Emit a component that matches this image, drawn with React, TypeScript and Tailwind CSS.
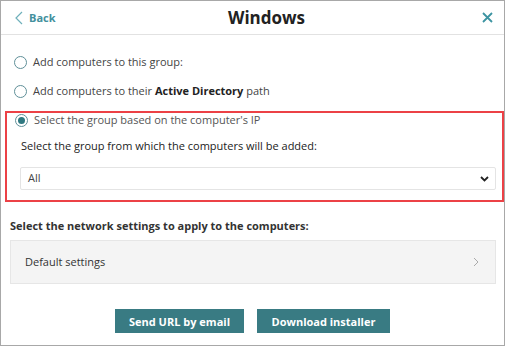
import React from "react";

function Radio({ checked }: { checked?: boolean }) {
  return (
    <span className="w-[13px] h-[13px] rounded-full border border-[#5f8f98] flex items-center justify-center shrink-0 bg-white">
      {checked && <span className="w-[7px] h-[7px] rounded-full bg-[#2f7880]" />}
    </span>
  );
}

export default function App() {
  return (
    <div className="w-[505px] h-[346px] border border-[#a8a8a8] bg-white flex flex-col font-['Open_Sans',sans-serif] text-[11px] text-[#333]">
      <div className="h-[34px] shrink-0 border-b border-[#e2e2e2] relative flex items-center justify-center pl-[28px]">
        <div className="absolute left-[13px] top-0 h-full flex items-center gap-[5px] text-[#43909d]">
          <svg width="10" height="14" viewBox="0 0 10 14" fill="none">
            <path d="M8 1 L2 7 L8 13" stroke="#6fb0bb" strokeWidth="1.2" />
          </svg>
          <span className="font-bold text-[11px] leading-none">Back</span>
        </div>
        <span className="font-bold text-[17px] text-[#222] leading-none">Windows</span>
        <div className="absolute right-[11px] top-0 h-full flex items-center">
          <svg width="11" height="11" viewBox="0 0 11 11" fill="none">
            <path d="M1 1 L10 10 M10 1 L1 10" stroke="#3d94a2" strokeWidth="1.8" />
          </svg>
        </div>
      </div>

      <div className="flex flex-col pl-[13px] pt-[21px] gap-[16px]">
        <div className="flex items-center gap-[6px] h-[13px]">
          <Radio />
          <span className="text-[#444]">Add computers to this group:</span>
        </div>
        <div className="flex items-center gap-[6px] h-[13px]">
          <Radio />
          <span className="text-[#444]">
            Add computers to their <span className="font-bold text-[#222]">Active Directory</span> path
          </span>
        </div>
      </div>

      <div className="mt-[13px] ml-[4px] w-[499px] h-[91px] border-2 border-[#ec4146] flex flex-col pl-[8px] pr-[6px]">
        <div className="flex items-center gap-[6px] h-[13px] mt-[1px]">
          <Radio checked />
          <span className="text-[#555]">Select the group based on the computer's IP</span>
        </div>
        <div className="mt-[13px] ml-[6px] text-[#222] leading-none">
          Select the group from which the computers will be added:
        </div>
        <div className="mt-[16px] ml-[5px] h-[23px] border border-[#e4e4e4] rounded-[2px] flex items-center justify-between pl-[7px] pr-[6px]">
          <span className="text-[#444]">All</span>
          <svg width="9" height="6" viewBox="0 0 9 6" fill="none">
            <path d="M1 1 L4.5 4.5 L8 1" stroke="#222" strokeWidth="1.8" />
          </svg>
        </div>
      </div>

      <div className="mt-[18px] pl-[9px] font-bold text-[#333] leading-none">
        Select the network settings to apply to the computers:
      </div>
      <div className="mt-[9px] ml-[9px] w-[486px] h-[44px] bg-[#f4f4f4] border border-[#e6e6e6] flex items-center justify-between pl-[14px] pr-[16px]">
        <span className="text-[#333]">Default settings</span>
        <svg width="6" height="10" viewBox="0 0 6 10" fill="none">
          <path d="M1 1 L5 5 L1 9" stroke="#aaa" strokeWidth="1" />
        </svg>
      </div>

      <div className="mt-[25px] flex justify-center gap-[13px]">
        <button className="w-[129px] h-[24px] bg-[#397b83] text-white font-bold text-[11px] leading-none">
          Send URL by email
        </button>
        <button className="w-[133px] h-[24px] bg-[#397b83] text-white font-bold text-[11px] leading-none">
          Download installer
        </button>
      </div>
    </div>
  );
}
